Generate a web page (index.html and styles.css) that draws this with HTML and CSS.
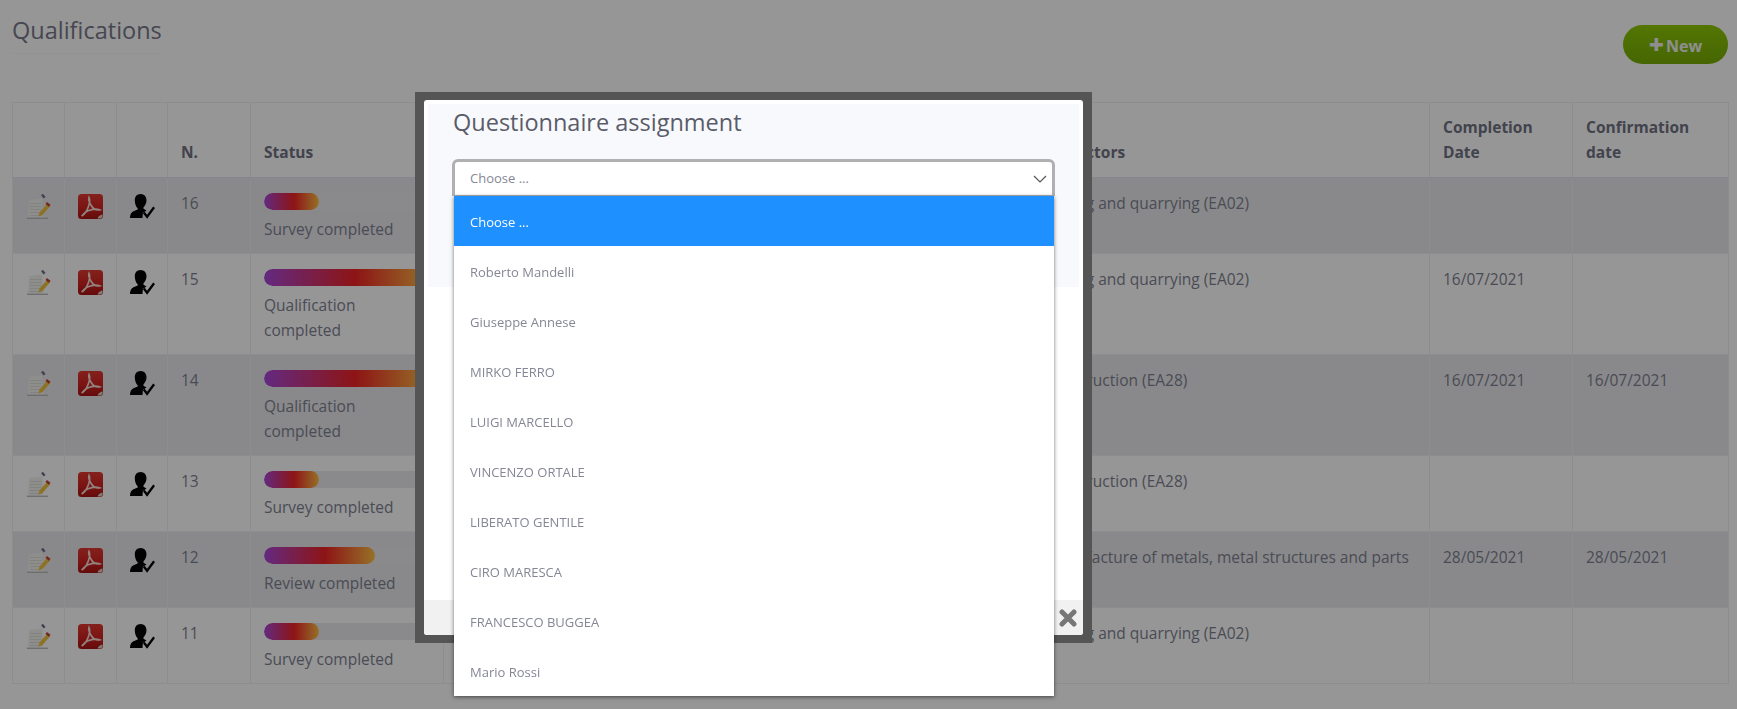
FILE: index.html
```html
<!DOCTYPE html>
<html lang="en">
<head>
<meta charset="utf-8">
<title>Qualifications</title>
<link rel="stylesheet" href="styles.css">
</head>
<body>
<svg class="defs" width="0" height="0" aria-hidden="true">
  <defs>
    <linearGradient id="pdfbg" x1="0" y1="0" x2="0" y2="1"><stop offset="0" stop-color="#e0362c"/><stop offset=".55" stop-color="#d0201c"/><stop offset="1" stop-color="#a81010"/></linearGradient>
    <symbol id="i-note" viewBox="0 0 25 25">
      <path d="M3 6l13-1.500 1.500 19H2z" fill="#f2f1ec"/>
      <path d="M4 9.500h11.500M4 12.500h11.500M4 15.500h11.500M4 18.500h11.500M4 21.500h11.500" stroke="#dddcd6" stroke-width="1"/>
      <path d="M1 24.300h21" stroke="#bbb" stroke-width="1.400"/>
      <path d="M21.500 9.500l3 2.300-8 9.200-4 1.500 1-4z" fill="#f0c23a"/>
      <path d="M21 8l3.500 2.700-1.600 2-3.400-2.700z" fill="#c8402e"/>
      <path d="M16 .5l2.600 3.300" stroke="#6a7088" stroke-width="2.400"/>
    </symbol>
    <symbol id="i-pdf" viewBox="0 0 25 25">
      <rect x="0" y="0" width="25" height="25" rx="3.500" fill="url(#pdfbg)"/>
      <path d="M11 3.500c-.8 2.500.8 6 2.500 8.500 1.700 2.600 4.500 4.600 8 3.800-3.200-1.300-7.800-.6-11.500 1-2.700 1.200-5 3.300-6.200 5.200 2.700-1.500 5-5 6.500-9 1-2.800 1.800-7.500.7-9.500z" fill="none" stroke="#f6dcd5" stroke-width="1.700"/>
      <path d="M19.500 24.500c.6-1.800 2.600-3.400 5-3.900v1a2.900 2.900 0 0 1-2.900 2.900z" fill="#ddd2c2"/>
    </symbol>
    <symbol id="i-user" viewBox="0 0 25 25">
      <path d="M10.500 0c3.800 0 6 2.800 6 6.200 0 3-1.500 5.600-3 7v1.600l3 1.600-3.600 2.600-.4 5H0c0-3.300 1.200-5.600 3.500-6.700l4.200-1.800v-1.300C6 12.800 4.800 9.700 4.800 6.200 4.800 2.800 6.800 0 10.500 0z" fill="#000"/>
      <path d="M13.800 18.500l3.300 4.300 7-9.500" fill="none" stroke="#000" stroke-width="2.300"/>
    </symbol>
  </defs>
</svg>

<div class="page">
  <header class="top">
    <h1 class="title">Qualifications</h1>
    <button class="btn-new" type="button"><span class="plus">+</span>New</button>
  </header>

  <table class="grid">
    <colgroup>
      <col class="c-icon"><col class="c-icon"><col class="c-icon3"><col class="c-num"><col class="c-status"><col class="c-hidden"><col class="c-sector"><col class="c-comp"><col class="c-conf">
    </colgroup>
    <thead>
      <tr><th></th><th></th><th></th><th>N.</th><th>Status</th><th></th><th>EA Sectors</th><th>Completion Date</th><th>Confirmation date</th></tr>
    </thead>
    <tbody>
      <tr class="odd">
        <td class="ic"><svg class="ico"><use href="#i-note"/></svg></td><td class="ic"><svg class="ico"><use href="#i-pdf"/></svg></td><td class="ic"><svg class="ico"><use href="#i-user"/></svg></td>
        <td>16</td><td><div class="track"><div class="bar s1"></div></div>Survey completed</td><td></td><td>Mining and quarrying (EA02)</td><td></td><td></td>
      </tr>
      <tr>
        <td class="ic"><svg class="ico"><use href="#i-note"/></svg></td><td class="ic"><svg class="ico"><use href="#i-pdf"/></svg></td><td class="ic"><svg class="ico"><use href="#i-user"/></svg></td>
        <td>15</td><td><div class="track"><div class="bar s3"></div></div>Qualification completed</td><td></td><td>Mining and quarrying (EA02)</td><td>16/07/2021</td><td></td>
      </tr>
      <tr class="odd">
        <td class="ic"><svg class="ico"><use href="#i-note"/></svg></td><td class="ic"><svg class="ico"><use href="#i-pdf"/></svg></td><td class="ic"><svg class="ico"><use href="#i-user"/></svg></td>
        <td>14</td><td><div class="track"><div class="bar s3"></div></div>Qualification completed</td><td></td><td>Construction (EA28)</td><td>16/07/2021</td><td>16/07/2021</td>
      </tr>
      <tr>
        <td class="ic"><svg class="ico"><use href="#i-note"/></svg></td><td class="ic"><svg class="ico"><use href="#i-pdf"/></svg></td><td class="ic"><svg class="ico"><use href="#i-user"/></svg></td>
        <td>13</td><td><div class="track"><div class="bar s1"></div></div>Survey completed</td><td></td><td>Construction (EA28)</td><td></td><td></td>
      </tr>
      <tr class="odd">
        <td class="ic"><svg class="ico"><use href="#i-note"/></svg></td><td class="ic"><svg class="ico"><use href="#i-pdf"/></svg></td><td class="ic"><svg class="ico"><use href="#i-user"/></svg></td>
        <td>12</td><td><div class="track"><div class="bar s2"></div></div>Review completed</td><td></td><td>Manufacture of metals, metal structures and parts</td><td>28/05/2021</td><td>28/05/2021</td>
      </tr>
      <tr>
        <td class="ic"><svg class="ico"><use href="#i-note"/></svg></td><td class="ic"><svg class="ico"><use href="#i-pdf"/></svg></td><td class="ic"><svg class="ico"><use href="#i-user"/></svg></td>
        <td>11</td><td><div class="track"><div class="bar s1"></div></div>Survey completed</td><td></td><td>Mining and quarrying (EA02)</td><td></td><td></td>
      </tr>
    </tbody>
  </table>
</div>

<div class="overlay"></div>

<div class="modal">
  <div class="modal-inner">
    <div class="panel">
      <h2 class="modal-title">Questionnaire assignment</h2>
      <div class="select">
        <div class="select-box">
          <span>Choose ...</span>
          <svg class="chev" width="14" height="8" viewBox="0 0 14 8"><path d="M1 1l6 6 6-6" fill="none" stroke="#555" stroke-width="1.200"/></svg>
        </div>
        <ul class="menu">
          <li class="active">Choose ...</li>
          <li>Roberto Mandelli</li>
          <li>Giuseppe Annese</li>
          <li>MIRKO FERRO</li>
          <li>LUIGI MARCELLO</li>
          <li>VINCENZO ORTALE</li>
          <li>LIBERATO GENTILE</li>
          <li>CIRO MARESCA</li>
          <li>FRANCESCO BUGGEA</li>
          <li>Mario Rossi</li>
        </ul>
      </div>
    </div>
    <div class="modal-footer">
      <svg class="close" width="18" height="18" viewBox="0 0 18 18"><path d="M3 3l12 12M15 3L3 15" stroke="#777" stroke-width="5" stroke-linecap="round"/></svg>
    </div>
  </div>
</div>
</body>
</html>
```

FILE: styles.css
```css
* { box-sizing: border-box; }
html, body { margin: 0; height: 100%; }
body {
  background: #fff;
  color: #7d7f8c;
  font-family: "Open Sans", "Noto Sans", sans-serif;
  font-size: 15.500px;
  line-height: 25px;
  overflow: hidden;
}
.defs { position: absolute; }
.page { padding: 0 9px 0 12px; }
.top {
  display: flex;
  justify-content: space-between;
  align-items: flex-start;
  height: 102px;
}
.title {
  margin: 14px 0 0;
  padding-bottom: 6px;
  font-size: 23.500px;
  line-height: 33px;
  font-weight: 400;
  color: #757785;
  border-bottom: 1px solid #f8f8f8;
}
.btn-new {
  margin-top: 25px;
  width: 105px;
  height: 39px;
  border: 0;
  border-radius: 20px;
  background: linear-gradient(#8cc800, #76ac00);
  color: #f2f2f2;
  font: 700 16px/39px "Open Sans", sans-serif;
  padding: 0;
}
.plus { font-size: 26px; font-weight: 800; vertical-align: -2px; margin-right: 2px; }

.grid { width: 1716px; table-layout: fixed; border-collapse: collapse; }
.c-icon { width: 52px; }
.c-icon3 { width: 51px; }
.c-num { width: 83px; }
.c-status { width: 193px; }
.c-hidden { width: 588px; }
.c-sector { width: 398px; }
.c-comp { width: 143px; }
.c-conf { width: 156px; }

.grid th, .grid td { border: 1px solid #eeeff1; padding: 13px 13px 11px; vertical-align: top; text-align: left; }
.grid th {
  height: 75px;
  padding-top: 0;
  vertical-align: bottom;
  padding-bottom: 12px;
  font-weight: 700;
  color: #6e707e;
  border-bottom: 1px solid #e3e6f0;
}
.grid tr.odd td { background: #e8e9eb; }
.grid td.ic { padding: 16px 0 0; text-align: center; }
.ico { display: block; width: 25px; height: 25px; margin: 0 auto; }

.track { width: 166px; height: 17px; margin: 2px 0 7px; border-radius: 9px; background: #ebebed; overflow: hidden; }
.bar { height: 100%; border-radius: 9px 0 0 9px; background: linear-gradient(90deg, #a845d8 0, #f02020 55%, #ffc040 100%); }
.s1 { width: 33.330%; border-radius: 9px; }
.s2 { width: 66.660%; border-radius: 9px; }
.s3 { width: 100%; }

.overlay { position: fixed; inset: 0; background: rgba(4, 4, 8, .42); }

.modal {
  position: fixed;
  left: 415px;
  top: 92px;
  width: 677px;
  height: 551px;
  padding: 8px;
  background: #555;
}
.modal-inner {
  height: 100%;
  margin-left: 1px;
  margin-right: 1px;
  background: #fff;
  border-radius: 3px;
  padding: 4px 4px 0 4px;
  display: flex;
  flex-direction: column;
  justify-content: space-between;
}
.panel { height: 183px; background: #f8f9fc; padding: 0 24px; }
.modal-title {
  margin: 0;
  padding: 2px 0 0 1px;
  font-size: 23.500px;
  line-height: 32px;
  font-weight: 400;
  color: #5a5c69;
}
.select { position: relative; margin-top: 21px; }
.select-box {
  height: 37px;
  border: 3px solid #b0b0b2;
  border-bottom-width: 1px;
  border-radius: 6px 6px 0 0;
  background: #fff;
  display: flex;
  justify-content: space-between;
  align-items: center;
  padding: 0 5px 0 15px;
  font-size: 13px;
  color: #858796;
}
.menu {
  position: absolute;
  left: 2px;
  right: 1px;
  top: 37px;
  margin: 0;
  padding: 0;
  list-style: none;
  background: #fff;
  box-shadow: 0 1px 4px rgba(0, 0, 0, .55);
  font-size: 13px;
}
.menu li { height: 50px; line-height: 52px; padding-left: 16px; color: #858796; }
.menu li.active { background: #1e90ff; color: #fff; }

.modal-footer {
  height: 35px;
  margin: 0 -4px;
  background: #f1f1f1;
  display: flex;
  justify-content: flex-end;
  align-items: center;
  padding-right: 6px;
  border-radius: 0 0 3px 3px;
}
```
